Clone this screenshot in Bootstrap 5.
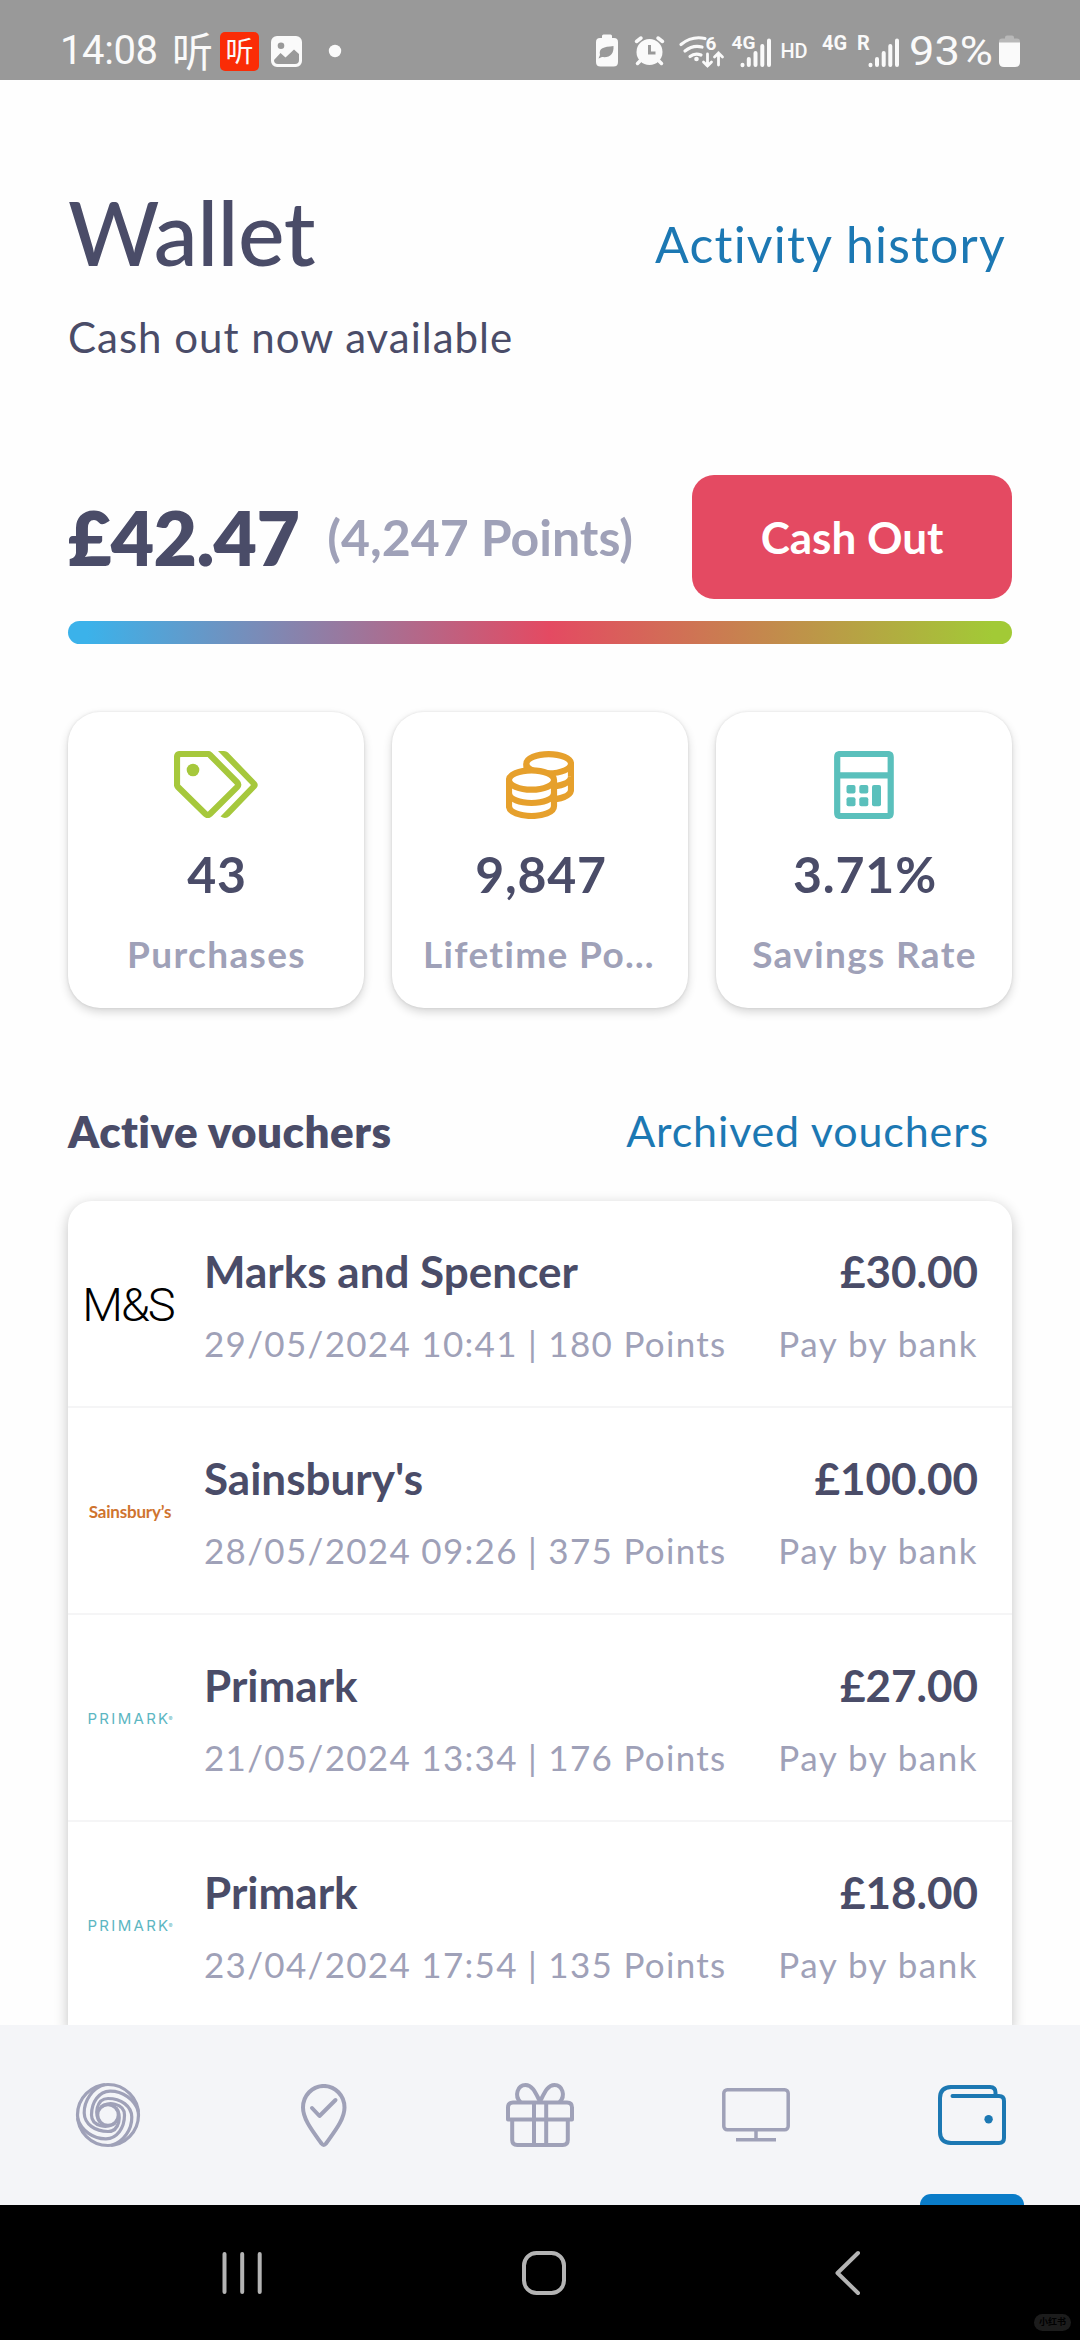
<!DOCTYPE html>
<html lang="en">
<head>
<meta charset="utf-8">
<meta name="viewport" content="width=device-width, initial-scale=1">
<title>Wallet</title>
<link href="https://cdn.jsdelivr.net/npm/bootstrap@5.3.0/dist/css/bootstrap.min.css" rel="stylesheet">
<style>
  :root { --ink:#4a4c68; --muted:#9fa1b8; --link:#1c78b3; --rose:#e44a62; --lime:#a6c83c; --amber:#e6a02c; --teal:#5ac0bc; }
  body { font-family: Lato, "Noto Sans CJK SC", sans-serif; color: var(--ink); background:#fefefe; }
  .phone { width:1080px; height:2340px; overflow:hidden; }
  svg { display:block; flex:none; }
  a { color: var(--link); text-decoration:none; white-space:nowrap; }

  .statusbar { height:80px; background:#999; color:#fafafa; font-family: Roboto, "Noto Sans CJK SC", sans-serif; padding:32px 60px 0 60px; line-height:38px; }
  .clock { font-size:40px; width:112px; letter-spacing:-.4px; }
  .ting { font-size:41px; line-height:34px; width:41px; font-weight:400; font-family:"Noto Sans CJK SC", sans-serif; white-space:nowrap; }
  .ting-badge { width:39px; height:39px; border-radius:5px; background:#fa2c06; font-size:28px; font-family:"Noto Sans CJK SC", sans-serif; margin-left:7px; line-height:36px; }

  .screen { height:1945px; padding:99px 68px 0; overflow:hidden; }
  .page-title { font-size:88px; line-height:106px; font-weight:500; letter-spacing:-.6px; }
  .history { font-size:50px; line-height:60px; margin:35px 6px 0 0; letter-spacing:1.2px; }
  .subtitle { font-size:42px; line-height:50px; margin-top:27px; letter-spacing:1px; }
  .balance { height:124px; margin-top:113px; }
  .amount { font-size:75px; line-height:90px; font-weight:800; letter-spacing:-.7px; }
  .pts { font-size:50px; line-height:60px; font-weight:700; color:var(--muted); margin-left:28px; letter-spacing:0; }
  .cashout { width:320px; height:124px; border-radius:22px; background:var(--rose); color:#fff; font-size:44px; font-weight:700; border:0; }
  .meter { height:23px; margin-top:22px; border-radius:12px; background:linear-gradient(90deg,#3bb2ea 2%, #e44a62 51%, #a2ca36 98%); }
  .stats { gap:28px; margin-top:68px; }
  .stat { width:296px; height:296px; border-radius:32px; border:0; background:#fff; box-shadow:0 4px 10px rgba(0,0,0,.16), 0 0 3px rgba(0,0,0,.10); padding-top:39px; }
  .stat-icon { height:67px; }
  .stat-num { font-size:50px; line-height:60px; font-weight:700; margin-top:26px; padding-left:2px; letter-spacing:.8px; }
  .stat-label { font-size:37px; line-height:44px; font-weight:700; color:var(--muted); margin-top:28px; padding-left:1px; letter-spacing:1.35px; width:236px; }
  .section-head { margin-top:97px; font-size:44px; line-height:52px; }
  .section-title { font-weight:800; letter-spacing:.45px; }
  .archived { font-size:43px; margin-right:23px; letter-spacing:.85px; }
  .vouchers { margin-top:44px; border-radius:24px 24px 0 0; background:#fff; box-shadow:0 4px 14px rgba(0,0,0,.24); }
  .voucher { height:207px; padding:2px 34px 0 0; border-bottom:2px solid #f5f5f6; }
  .brand { width:124px; margin-right:12px; line-height:1; white-space:nowrap; }
  .brand-ms { font-size:47px; font-weight:300; font-family:Roboto, sans-serif; color:#000; letter-spacing:-2px; padding-right:4px; }
  .brand-sb { font-size:17px; font-weight:700; color:#cf742f; letter-spacing:-.2px; }
  .brand-pk { font-size:15px; font-family:Inter, sans-serif; color:#5cb6c2; letter-spacing:2.3px; }
  .brand-pk sup { font-size:6px; letter-spacing:0; margin-left:-2px; }
  .name { font-size:44px; line-height:52px; font-weight:700; }
  .meta { font-size:35px; line-height:42px; color:var(--muted); margin-top:25px; letter-spacing:1.3px; white-space:nowrap; }
  .text-end .meta { letter-spacing:1.5px; }

  .tabbar { height:180px; background:#f4f5f8; }
  .tab { width:216px; height:180px; position:relative; color:var(--muted); }
  .tab-on { color:var(--link); }
  .tab-on::after { content:""; position:absolute; bottom:0; left:56px; width:104px; height:11px; border-radius:11px 11px 0 0; background:#0a7cc8; }
  .sysbar { height:135px; background:#000; color:#b4b4b4; position:relative; padding-left:222px; }
  .stamp { position:absolute; right:9px; bottom:9px; width:37px; height:17px; border-radius:9px; background:#1c1c1c; color:#000; font:700 9px/16px "Noto Sans CJK SC", sans-serif; text-align:center; }
</style>
</head>
<body>
<div class="phone d-flex flex-column">
  <header class="statusbar d-flex align-items-start">
    <div class="clock">14:08</div>
    <div class="ting">听</div>
    <div class="ting-badge text-center">听</div>
    <svg class="ms-auto" width="749" height="38" viewBox="271 32 749 38" fill="#fafafa" stroke="#fafafa" stroke-width="0" font-family="Roboto, sans-serif">
      <path fill-rule="evenodd" d="M277 36h19a6 6 0 0 1 6 6v19a6 6 0 0 1-6 6h-19a6 6 0 0 1-6-6V42a6 6 0 0 1 6-6zM281 42.500a3.300 3.300 0 1 0 0 6.600 3.300 3.300 0 0 0 0-6.600zM274 60q0 4 4 4h17q4 0 4-4v-6l-5-4.500-8.500 8-5-4.500z"/>
      <circle cx="335" cy="51" r="6.200"/>
      <path fill-rule="evenodd" d="M602 38v-2q0-1.500 1.500-1.500h7q1.500 0 1.500 1.500v2h2q4 0 4 4v20q0 4.500-4.500 4.500h-13q-4.500 0-4.500-4.500V42q0-4 4-4zM613.500 46c-10 1-15 2-13.500 9l-1.500 3.500 3.500-1.500c8 1 12-3 11.500-11z"/>
      <circle cx="649.500" cy="52" r="13"/>
      <path d="M636.500 41.500l4.500-3.500M662.500 41.500l-4.500-3.500M640 61l-2.500 2.500M659 61l2.500 2.500" stroke-width="3.500" stroke-linecap="round" fill="none"/>
      <path d="M649.500 45v8h6" stroke="#999" stroke-width="3" fill="none"/>
      <path d="M681 44.500q11-9 24-6M685 51q8-6.500 17-4M690 56.500q5-4 11-1.500" fill="none" stroke-width="3.200" stroke-linecap="round"/>
      <circle cx="696.500" cy="59" r="2.300"/>
      <path d="M707.500 54v12M703.500 62l4 4 4-4M718.500 65V53M714.500 57l4-4 4 4" fill="none" stroke-width="2.800" stroke-linecap="round"/>
      <text x="705.500" y="50" font-size="19" font-weight="700">6</text>
      <text x="731.500" y="48.500" font-size="19" font-weight="700">4G</text>
      <g stroke-width="4" stroke-linecap="round"><path d="M742.500 65.200v-.5M748.800 65V59M755.500 65V53M762.300 65V46M769 65V40.500"/><path d="M870.500 65.200v-.5M877 65V59M883.700 65V53M890.300 65V46M897 65V40.500"/></g>
      <text x="780.500" y="57.500" font-size="20" font-weight="500" letter-spacing="-.3">HD</text>
      <text x="822" y="50" font-size="20" font-weight="700">4G</text>
      <text x="857" y="50" font-size="20" font-weight="700">R</text>
      <text x="909" y="65" font-size="40" textLength="84" lengthAdjust="spacingAndGlyphs">93%</text>
      <path d="M999 43v-1.500q0-3 3-3h3v-1q0-2 2-2h5q2 0 2 2v1h3q3 0 3 3V43z" fill="#b8b8b8"/><path d="M999 42.500h21V62q0 5-5 5h-11q-5 0-5-5z"/>
    </svg>
  </header>

  <main class="screen">
    <div class="d-flex justify-content-between align-items-start">
      <h1 class="page-title mb-0">Wallet</h1>
      <a href="#" class="history">Activity history</a>
    </div>
    <p class="subtitle mb-0">Cash out now available</p>

    <section class="balance d-flex align-items-center">
      <div class="amount">£42.47</div>
      <div class="pts">(4,247 Points)</div>
      <button class="btn cashout ms-auto p-0">Cash Out</button>
    </section>
    <div class="meter"></div>

    <section class="stats d-flex">
      <div class="card stat align-items-center">
        <div class="stat-icon"><svg width="84" height="67" viewBox="0 0 84 67" fill="#a6c83c"><path d="M6.500 3H34q1 0 2 1L63 31.200q2.300 2.500 0 5L36 63q-2.200 2-4.500 0L4 36q-1-1-1-2.500V6.500Q3 3 6.500 3z" fill="none" stroke="#a6c83c" stroke-width="6.200"/><circle cx="19" cy="19" r="6.300"/><path d="M44 0h6q2.500 0 4 1.500L82.500 31q2.500 3 0 6L55.500 65q-4 3.500-9 .5L77 34z"/></svg></div>
        <div class="stat-num">43</div>
        <div class="stat-label text-center text-truncate">Purchases</div>
      </div>
      <div class="card stat align-items-center">
        <div class="stat-icon"><svg width="68" height="68" viewBox="0 0 68 68" fill="#fff" stroke="#e6a02c" stroke-width="6.200"><path d="M20.500 12.700v26c0 13 44.500 13 44.500 0v-26"/><path d="M20.500 25.700c0 13 44.500 13 44.500 0"/><ellipse cx="42.700" cy="12.700" rx="22.300" ry="9.600"/><path d="M3 29v26c0 13.300 45 13.300 45 0V29"/><path d="M3 42c0 13.300 45 13.300 45 0"/><ellipse cx="25.500" cy="29" rx="22.500" ry="9.700"/></svg></div>
        <div class="stat-num">9,847</div>
        <div class="stat-label text-center text-truncate">Lifetime Points</div>
      </div>
      <div class="card stat align-items-center">
        <div class="stat-icon"><svg width="60" height="68" viewBox="0 0 60 68" fill="#5ac0bc"><path d="M3.200 6q0-3 3-3h47.500q3 0 3 3v56q0 3-3 3H6.200q-3 0-3-3zM3 24.300h54" fill="none" stroke="#5ac0bc" stroke-width="6.200"/><rect x="12.500" y="34" width="9" height="8.500" rx="2"/><rect x="25.300" y="34" width="9" height="8.500" rx="2"/><rect x="12.500" y="46.300" width="9" height="9" rx="2"/><rect x="25.300" y="46.300" width="9" height="9" rx="2"/><rect x="38" y="34" width="9" height="21.300" rx="2"/></svg></div>
        <div class="stat-num">3.71%</div>
        <div class="stat-label text-center text-truncate">Savings Rate</div>
      </div>
    </section>

    <div class="section-head d-flex justify-content-between">
      <div class="section-title">Active vouchers</div>
      <a href="#" class="archived">Archived vouchers</a>
    </div>

    <div class="vouchers">
      <div class="voucher d-flex align-items-center">
        <div class="brand brand-ms text-center">M&amp;S</div>
        <div class="flex-grow-1"><div class="name">Marks and Spencer</div><div class="meta">29/05/2024 10:41 | 180 Points</div></div>
        <div class="text-end"><div class="name">£30.00</div><div class="meta">Pay by bank</div></div>
      </div>
      <div class="voucher d-flex align-items-center">
        <div class="brand brand-sb text-center">Sainsbury’s</div>
        <div class="flex-grow-1"><div class="name">Sainsbury's</div><div class="meta">28/05/2024 09:26 | 375 Points</div></div>
        <div class="text-end"><div class="name">£100.00</div><div class="meta">Pay by bank</div></div>
      </div>
      <div class="voucher d-flex align-items-center">
        <div class="brand brand-pk text-center">PRIMARK<sup>®</sup></div>
        <div class="flex-grow-1"><div class="name">Primark</div><div class="meta">21/05/2024 13:34 | 176 Points</div></div>
        <div class="text-end"><div class="name">£27.00</div><div class="meta">Pay by bank</div></div>
      </div>
      <div class="voucher d-flex align-items-center">
        <div class="brand brand-pk text-center">PRIMARK<sup>®</sup></div>
        <div class="flex-grow-1"><div class="name">Primark</div><div class="meta">23/04/2024 17:54 | 135 Points</div></div>
        <div class="text-end"><div class="name">£18.00</div><div class="meta">Pay by bank</div></div>
      </div>
    </div>
  </main>

  <nav class="tabbar d-flex">
    <a class="tab d-flex align-items-center justify-content-center" href="#">
      <svg width="66" height="66" viewBox="-33 -33 66 66" fill="none" stroke="currentColor" stroke-width="3.200"><circle r="30.500"/><circle r="10.300"/>
        <path id="arm" d="M7 8C1 14-16.500 12-16.500 0C-16.500-13-9-23.500 2-23.800C14-24 27-16 30.500-3"/><use href="#arm" transform="rotate(90)"/><use href="#arm" transform="rotate(180)"/><use href="#arm" transform="rotate(270)"/></svg>
    </a>
    <a class="tab d-flex align-items-center justify-content-center" href="#">
      <svg width="46" height="63" viewBox="0 0 46 63" fill="none" stroke="currentColor" stroke-width="4" stroke-linecap="round" stroke-linejoin="round"><path d="M20.500 59.500C12 47.500 2 35.500 2 23.500a20.700 21.500 0 0 1 41.500 0C43.500 35.500 33.500 47.500 25 59.500q-2.300 2.800-4.500 0z"/><path d="M11 24l7.500 8L34.500 16"/></svg>
    </a>
    <a class="tab d-flex align-items-center justify-content-center" href="#">
      <svg width="68" height="65" viewBox="0 0 68 65" fill="none" stroke="currentColor" stroke-width="4" stroke-linejoin="round"><path d="M7 19.500h54q5 0 5 5V36.500H2V24.500q0-5 5-5zM6.200 36.500V57q0 5 5 5h45.600q5 0 5-5V36.500M28 19.500V62M40.200 19.500V62"/><path d="M14.500 19C8 13 11.500 2 19.500 2 27 2 30 11 34 18.500 38 11 41 2 48.500 2 56.500 2 60 13 53.500 19"/></svg>
    </a>
    <a class="tab d-flex align-items-center justify-content-center" href="#">
      <svg width="68" height="54" viewBox="0 0 68 54" fill="none" stroke="currentColor" stroke-width="3.500"><rect x="1.800" y="1.800" width="64.400" height="40" rx="3.500"/><path d="M34 42v9M14 51.800h40"/></svg>
    </a>
    <a class="tab tab-on d-flex align-items-center justify-content-center" href="#">
      <svg width="68" height="60" viewBox="0 0 68 60" fill="none" stroke="currentColor" stroke-width="4" stroke-linecap="round"><path d="M14.500 11H61q5 0 5 5V53q0 5-5 5H13Q2 57.500 2 47V13Q2 2.500 13 2H52q5.500 0 5.500 5.500V11"/><circle cx="50.600" cy="34.200" r="4.200" fill="currentColor" stroke="none"/></svg>
    </a>
  </nav>

  <footer class="sysbar d-flex align-items-center">
    <svg width="640" height="46" viewBox="222 2250 640 46" fill="none" stroke="currentColor" stroke-width="4" stroke-linecap="round" stroke-linejoin="round"><path d="M224.500 2254v38M242.200 2254v38M259.700 2254v38"/><rect x="524" y="2253" width="40" height="40" rx="12.500"/><path d="M858 2253l-20.500 20 20.500 20"/></svg>
    <div class="stamp">小红书</div>
  </footer>
</div>
<script src="https://cdn.jsdelivr.net/npm/bootstrap@5.3.0/dist/js/bootstrap.bundle.min.js"></script>
</body>
</html>
